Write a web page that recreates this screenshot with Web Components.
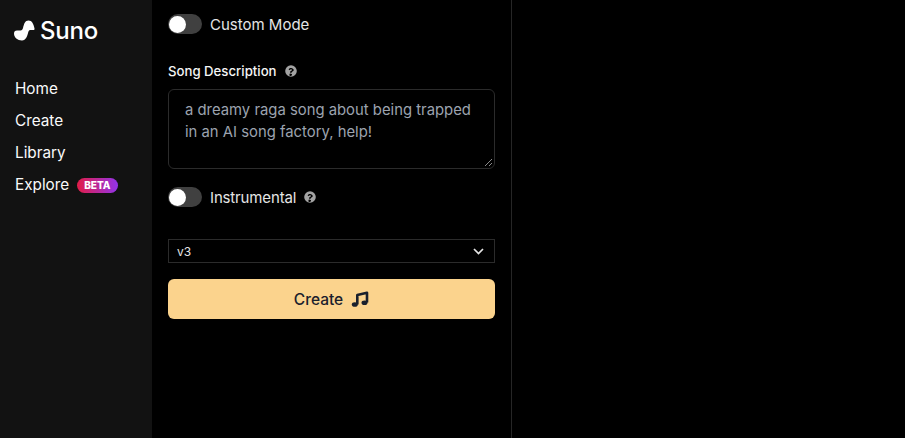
<!DOCTYPE html>
<html>
<head>
<meta charset="utf-8">
<style>
html, body { margin: 0; height: 100%; background: #000; overflow: hidden; }
body { font-family: Inter, "Liberation Sans", sans-serif; color: #fff; }
</style>
</head>
<body>
<suno-app>
    <suno-sidebar slot="sidebar"></suno-sidebar>
    <suno-form></suno-form>
</suno-app>

<script>
const HELP_ICON = `<svg viewBox="0 0 512 512" width="12" height="12" fill="#a3a3a3"><path d="M256 8a248 248 0 1 0 0 496 248 248 0 0 0 0-496zm0 448a48 48 0 1 1 0-88 44 44 0 0 1 0 88zm60-178c-22 14-30 23-30 38v6a12 12 0 0 1-12 12h-46a12 12 0 0 1-12-12v-10c0-38 29-53 51-65 19-11 31-18 31-32 0-18-23-30-42-30-24 0-35 11-51 31a12 12 0 0 1-17 2l-28-21a12 12 0 0 1-3-16c25-37 57-58 106-58 52 0 108 41 108 94 0 35-23 47-55 61z"/></svg>`;

class SunoApp extends HTMLElement {
    constructor() {
        super();
        this.attachShadow({ mode: "open" });
        this.shadowRoot.innerHTML = `
        <style>
            :host { display: grid; grid-template-columns: 152px 360px 1fr; height: 100vh; }
            .main { border-right: 1px solid #262626; padding: 0 16px; min-width: 0; }
        </style>
        <slot name="sidebar"></slot>
        <div class="main"><slot></slot></div>
        <div></div>
        `;
    }
}

class SunoSidebar extends HTMLElement {
    constructor() {
        super();
        this.attachShadow({ mode: "open" });
        this.shadowRoot.innerHTML = `
        <style>
            :host { display: flex; flex-direction: column; background: #121212; padding: 16px 0 0 14px; box-sizing: border-box; height: 100%; }
            .logo { display: flex; align-items: center; gap: 5px; height: 29px; font-size: 24px; font-weight: 500; letter-spacing: -0.2px; }
            nav { display: flex; flex-direction: column; margin: 28px 0 0 1px; font-size: 15.3px; line-height: 32px; color: #fafafa; }
            .beta {
                display: inline-block; margin-left: 8px; padding: 0 7px; height: 15px; line-height: 15px; border-radius: 8px;
                font-size: 10px; font-weight: 800; vertical-align: 1px; color: #fff;
                background: linear-gradient(90deg, #e11d48, #9333ea);
            }
        </style>
        <div class="logo">
            <svg width="21" height="21" viewBox="0 0 21 21"><path fill="#fff" d="M0 13.500C0 11.500 1 10.500 3 10.500h3.500C8 10.500 8.500 9.500 9 8 10 4 11 .5 14.500.5c3.500 0 5 3.500 6 8 .2 1-.3 1.500-1.200 1.500H16.500c-1 0-1.700.6-2.200 2-1 4-2.300 8.500-6.300 8.500C3.500 20.500 0 17.500 0 13.500z"/></svg>
            <span>Suno</span>
        </div>
        <nav>
            <span>Home</span>
            <span>Create</span>
            <span>Library</span>
            <span>Explore<span class="beta">BETA</span></span>
        </nav>
        `;
    }
}

class SunoToggle extends HTMLElement {
    constructor() {
        super();
        this.attachShadow({ mode: "open" });
        this.shadowRoot.innerHTML = `
        <style>
            :host { display: flex; align-items: center; gap: 8px; height: 20px; font-size: 15px; color: #e5e5e5; }
            .track { width: 34px; height: 20px; border-radius: 10px; background: #404040; display: flex; align-items: center; padding-left: 1px; box-sizing: border-box; }
            .knob { width: 17px; height: 17px; border-radius: 50%; background: #fff; }
        </style>
        <div class="track"><div class="knob"></div></div>
        <slot></slot>
        `;
    }
}

class SunoForm extends HTMLElement {
    constructor() {
        super();
        this.attachShadow({ mode: "open" });
        this.shadowRoot.innerHTML = `
        <style>
            :host { display: flex; flex-direction: column; padding-top: 14px; font-family: "Inter", sans-serif; }
            .label { display: flex; align-items: center; gap: 8px; margin-top: 28px; height: 17px; font-size: 13.2px; font-weight: 500; color: #f5f5f5; }
            .prompt {
                margin-top: 10px; height: 80px; box-sizing: border-box; border: 1px solid #2b2b2b; border-radius: 6px;
                padding: 9px 16px; font-size: 14.85px; line-height: 22px; color: #9ca3af; position: relative;
            }
            .grip { position: absolute; right: 1px; bottom: 1px; }
            .row { display: flex; align-items: center; gap: 8px; letter-spacing: -0.15px; }
            .instr { margin-top: 18px; }
            .select {
                margin-top: 32px; height: 24px; box-sizing: border-box; border: 1px solid #2b2b2b;
                display: flex; align-items: center; justify-content: space-between; padding: 0 10px 0 8px; font-size: 12px; color: #e5e5e5;
            }
            .create {
                margin-top: 16px; height: 40px; border-radius: 6px; background: #fbd38d; color: #1a202c;
                display: flex; align-items: center; justify-content: center; gap: 8px; font-size: 15.5px; font-weight: 500;
            }
        </style>
        <suno-toggle>Custom Mode</suno-toggle>
        <div class="label"><span>Song Description</span>${HELP_ICON}</div>
        <div class="prompt">a dreamy raga song about being trapped in an AI song factory, help!
            <svg class="grip" width="9" height="9" viewBox="0 0 9 9" stroke="#8a8a8a" fill="none"><path d="M1 8 8 1M5 8 8 5"/></svg>
        </div>
        <div class="instr"><suno-toggle><span class="row">Instrumental ${HELP_ICON}</span></suno-toggle></div>
        <div class="select"><span>v3</span>
            <svg width="11" height="7" viewBox="0 0 11 7" fill="none" stroke="#e5e5e5" stroke-width="1.700"><path d="M1 1 5.500 5.500 10 1"/></svg>
        </div>
        <div class="create"><span>Create</span>
            <svg width="18" height="16" viewBox="0 0 18 16" fill="none" stroke="#1a202c" stroke-width="2.600"><path d="M6.300 13.500V4L16 1.700V11.500" stroke-linejoin="round"/><ellipse cx="3.800" cy="13.500" rx="3" ry="2.300" fill="#1a202c" stroke="none"/><ellipse cx="13.500" cy="11.700" rx="3" ry="2.300" fill="#1a202c" stroke="none"/></svg>
        </div>
        `;
    }
}

customElements.define("suno-app", SunoApp);
customElements.define("suno-sidebar", SunoSidebar);
customElements.define("suno-toggle", SunoToggle);
customElements.define("suno-form", SunoForm);
</script>
</body>
</html>
